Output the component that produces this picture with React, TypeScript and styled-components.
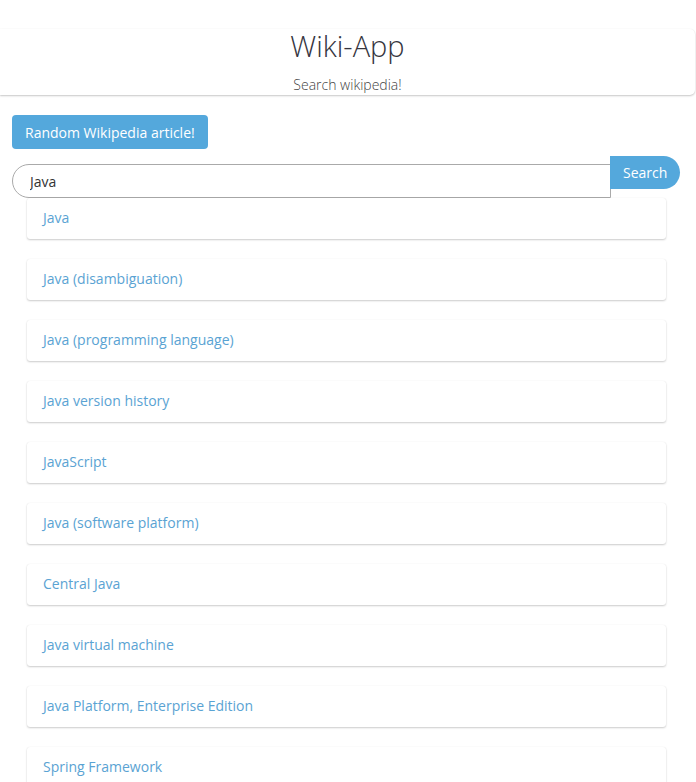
import React from "react";
import styled, { createGlobalStyle } from "styled-components";

const Global = createGlobalStyle`
  html, body { margin: 0; padding: 0; background: #fff; }
  body { font-family: "Open Sans", "Liberation Sans", sans-serif; }
`;

const Header = styled.header`
  margin: 29px 1px 0 0;
  height: 66px;
  background: #fff;
  border-radius: 0 5px 5px 0;
  box-shadow: 0 1px 2px rgba(0,0,0,0.22), 0 0 1px rgba(0,0,0,0.06);
  display: flex;
  flex-direction: column;
  align-items: center;
`;

const Title = styled.h1`
  margin: 0;
  font-weight: 300;
  font-size: 29px;
  line-height: 34px;
  color: #35353e;
`;

const Subtitle = styled.p`
  margin: 12px 0 0;
  font-weight: 300;
  font-size: 14px;
  line-height: 20px;
  color: #444;
`;

const Main = styled.main`
  padding: 20px 12px 0;
`;

const RandomButton = styled.button`
  font-family: inherit;
  font-size: 14px;
  color: #fff;
  background: #54a8dc;
  border: none;
  border-radius: 4px;
  height: 34px;
  padding: 0 13px;
  cursor: pointer;
`;

const SearchRow = styled.form`
  margin-top: 7px;
  display: flex;
  align-items: flex-start;
`;

const SearchInput = styled.input`
  box-sizing: border-box;
  margin-top: 8px;
  width: 599px;
  height: 34px;
  border: 1px solid #aaa;
  border-radius: 17px 0 0 17px;
  padding: 0 17px;
  font-family: inherit;
  font-size: 14px;
  color: #333;
  outline: none;
`;

const SearchButton = styled.button`
  margin-left: -1px;
  width: 70px;
  height: 33px;
  border: none;
  background: #54a8dc;
  color: #fff;
  font-family: inherit;
  font-size: 14px;
  border-radius: 0 17px 17px 0;
  text-align: left;
  padding: 0 0 0 13px;
`;

const List = styled.ul`
  list-style: none;
  margin: 0 0 0 15px;
  padding: 0;
  width: 639px;
  display: flex;
  flex-direction: column;
  gap: 20px;
`;

const Card = styled.li`
  box-sizing: border-box;
  height: 41px;
  background: #fff;
  border-radius: 3px;
  box-shadow: 0 1px 2px rgba(0,0,0,0.2), 0 0 1px rgba(0,0,0,0.08);
  display: flex;
  align-items: center;
  padding: 0 0 2px 16px;
`;

const CardLink = styled.a`
  color: #5aa3d3;
  font-size: 14px;
  text-decoration: none;
`;

const results = [
  "Java",
  "Java (disambiguation)",
  "Java (programming language)",
  "Java version history",
  "JavaScript",
  "Java (software platform)",
  "Central Java",
  "Java virtual machine",
  "Java Platform, Enterprise Edition",
  "Spring Framework",
];

export default function App() {
  return (
    <>
      <Global />
      <Header>
        <Title>Wiki-App</Title>
        <Subtitle>Search wikipedia!</Subtitle>
      </Header>
      <Main>
        <RandomButton>Random Wikipedia article!</RandomButton>
        <SearchRow onSubmit={(e) => e.preventDefault()}>
          <SearchInput defaultValue="Java" />
          <SearchButton type="submit">Search</SearchButton>
        </SearchRow>
        <List>
          {results.map((r) => (
            <Card key={r}>
              <CardLink href="#">{r}</CardLink>
            </Card>
          ))}
        </List>
      </Main>
    </>
  );
}
